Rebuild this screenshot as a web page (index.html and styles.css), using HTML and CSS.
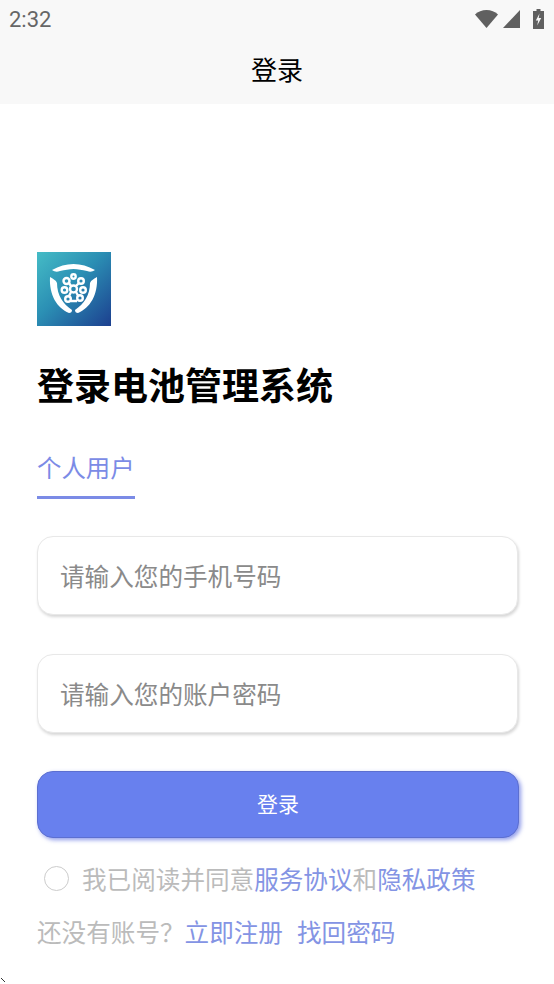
FILE: index.html
```html
<!DOCTYPE html>
<html lang="zh-CN">
  <head>
    <meta charset="UTF-8" />
    <meta name="viewport" content="width=device-width, initial-scale=1.0" />
    <title>登录</title>
    <link rel="stylesheet" href="styles.css">
  </head>
  <body>
    <div class="top">
      <div class="status">
        <span class="time">2:32</span>
        <div class="status-icons">
          <svg class="wifi" width="23" height="18" viewBox="0 0 23 18"><path d="M0 4.500C3 1.700 7 0 11.500 0S20 1.700 23 4.500L11.500 18z" fill="#606060"/></svg>
          <svg class="signal" width="17" height="18" viewBox="0 0 17 18"><path d="M17 0v18H0z" fill="#606060"/></svg>
          <svg width="11" height="20" viewBox="0 0 11 20"><path d="M3.500 0h4v2H11v18H0V2h3.500z" fill="#606060"/><path d="M6.500 4.500 2.800 11.500h2.400l-1 5 4-7.500H5.700z" fill="#f8f8f8"/></svg>
        </div>
      </div>
      <div class="nav">登录</div>
    </div>

    <div class="main">
      <svg class="logo" width="74" height="74" viewBox="0 0 74 74">
        <defs>
          <linearGradient id="logoBg" x1="0" y1="0" x2="1" y2="1">
            <stop offset="0" stop-color="#45bcc6" />
            <stop offset="0.45" stop-color="#2b8fb4" />
            <stop offset="1" stop-color="#1c3f8f" />
          </linearGradient>
        </defs>
        <rect width="74" height="74" fill="url(#logoBg)" />
        <path d="M15 18C22 14 29 12 36.500 12S51 14 58 18C55 20 53 20 50 19C45 18 41 17 36.500 17S28 18 23 19C20 20 18 20 15 18z" fill="#fff" />
        <path d="M13 25C16 27 19 28 20 31C20 43 26 52 35 58C35 60 34 61 32 61C20 56 12 43 13 25z" fill="#fff" />
        <path d="M60 25C57 27 54 28 53 31C53 43 47 52 38 58C38 60 39 61 41 61C53 56 61 43 60 25z" fill="#fff" />
        <g fill="none" stroke="#fff" stroke-width="2.400">
          <circle cx="36.500" cy="24.500" r="2.200" />
          <circle cx="29.500" cy="29" r="3" />
          <circle cx="44" cy="29" r="2.800" />
          <circle cx="27.500" cy="38" r="2.800" />
          <circle cx="46" cy="38" r="2.800" />
          <circle cx="36.500" cy="37" r="3.500" />
          <circle cx="31" cy="47" r="2.800" />
          <circle cx="43" cy="46" r="2.800" />
          <path d="M34 40l-2 4M39 40l2 3.500M34 34l-2-3M39 34l3-3M34 49h6" />
        </g>
      </svg>
      <h1 class="title">登录电池管理系统</h1>
      <div class="tabs"><span class="tab">个人用户</span></div>
      <div class="field">请输入您的手机号码</div>
      <div class="field">请输入您的账户密码</div>
      <div class="button">登录</div>
      <div class="agree">
        <span class="check"></span>
        <span>我已阅读并同意<a class="link">服务协议</a>和<a class="link">隐私政策</a></span>
      </div>
      <div class="more">还没有账号？<a class="link">立即注册</a><a class="link">找回密码</a></div>
    </div>
    <svg class="corner" width="7" height="7" viewBox="0 0 7 7"><path d="M1 1l4 4" stroke="#333" stroke-width="1"/></svg>
  </body>
</html>
```

FILE: styles.css
```css
* {
  margin: 0;
  padding: 0;
  box-sizing: border-box;
}
body {
  position: relative;
  height: 984px;
  overflow: hidden;
  color: #000;
  background: #fff;
  font-family: "Noto Sans CJK SC", "Liberation Sans", sans-serif;
}
.top {
  height: 104px;
  background: #f8f8f8;
}
.status {
  display: flex;
  justify-content: space-between;
  align-items: center;
  height: 38px;
  padding: 0 10px 0 9px;
}
.time {
  font-family: Roboto, sans-serif;
  font-size: 22px;
  color: #666;
}
.status-icons {
  display: flex;
  align-items: center;
  gap: 13px;
}
.wifi {
  margin-right: -8px;
}
.nav {
  height: 64px;
  line-height: 62px;
  text-align: center;
  font-size: 26px;
}
.main {
  display: flex;
  flex-direction: column;
  padding: 148px 35px 0 37px;
}
.logo {
  display: block;
}
.title {
  margin-top: 31px;
  font-size: 37px;
  line-height: 54px;
  font-weight: 700;
}
.tabs {
  display: flex;
  margin-top: 38px;
}
.tab {
  width: 98px;
  height: 50px;
  line-height: 35px;
  white-space: nowrap;
  font-size: 24.400px;
  color: #7b8be6;
  border-bottom: solid 3px #7b8be6;
}
.field {
  height: 79px;
  line-height: 76px;
  margin: 37px 1px 0 0;
  padding-left: 22px;
  font-size: 24.600px;
  color: #8a8a8a;
  background: #fff;
  border: solid 1px #e8e8e8;
  border-radius: 16px;
  box-shadow: 1px 2px 3px rgba(0, 0, 0, 0.16);
}
.field + .field {
  margin-top: 39px;
}
.button {
  height: 67px;
  line-height: 63px;
  margin-top: 38px;
  text-align: center;
  font-size: 21px;
  color: #fff;
  background: #6880ee;
  border: solid 1px #5c6fd0;
  border-radius: 16px;
  box-shadow: 2px 2px 4px rgba(72, 92, 220, 0.6);
}
.agree {
  display: flex;
  align-items: center;
  gap: 13px;
  margin-top: 22px;
  padding-left: 7px;
  font-size: 24.600px;
  line-height: 36px;
  color: #bbb;
}
.check {
  width: 25px;
  height: 25px;
  border: solid 1px #ccc;
  border-radius: 50%;
}
.link {
  color: #8494e4;
}
.more {
  margin-top: 17px;
  font-size: 24.600px;
  line-height: 36px;
  color: #bbb;
}
.more .link + .link {
  margin-left: 14px;
}
.corner {
  position: absolute;
  left: 0;
  bottom: 0;
}
```
